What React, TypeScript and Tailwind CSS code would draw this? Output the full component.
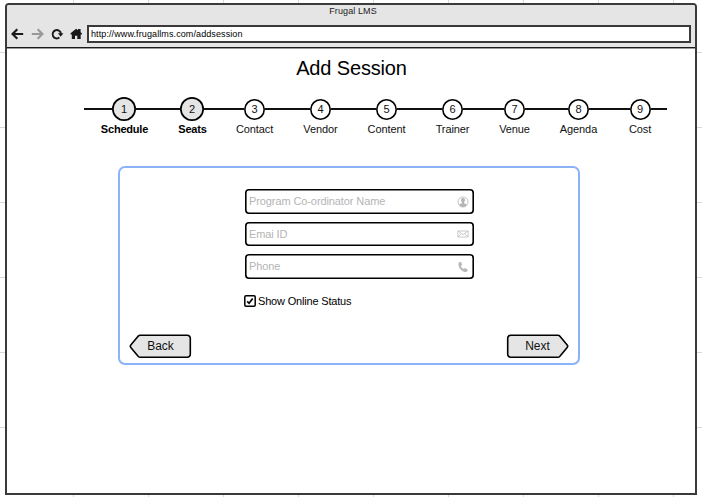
import React from "react";

type Step = { n: number; label: string; done?: boolean };

const steps: Step[] = [
  { n: 1, label: "Schedule", done: true },
  { n: 2, label: "Seats", done: true },
  { n: 3, label: "Contact" },
  { n: 4, label: "Vendor" },
  { n: 5, label: "Content" },
  { n: 6, label: "Trainer" },
  { n: 7, label: "Venue" },
  { n: 8, label: "Agenda" },
  { n: 9, label: "Cost" },
];

function NavIcons() {
  return (
    <div className="flex items-center">
      <svg className="ml-[4px] h-[12px] w-[13px]" viewBox="0 0 13 12" fill="none" stroke="#1c191b" strokeWidth="2.2">
        <path d="M12.2 6H2M6.3 1.2L1.5 6l4.8 4.8" />
      </svg>
      <svg className="ml-[7px] h-[12px] w-[13px]" viewBox="0 0 13 12" fill="none" stroke="#999" strokeWidth="2.2">
        <path d="M.8 6H11M6.7 1.2L11.5 6l-4.8 4.8" />
      </svg>
      <svg className="ml-[7px] h-[12px] w-[13px]" viewBox="0 0 13 12">
        <path d="M8.4 9.6A4.2 4.2 0 1 1 10 5.8" fill="none" stroke="#1c191b" strokeWidth="1.9" />
        <path d="M6.9 5.3h5.5L9.7 8.7z" fill="#1c191b" />
      </svg>
      <svg className="ml-[6px] h-[12px] w-[13px]" viewBox="0 0 13 12" fill="#1c191b">
        <path d="M6.1.7L8 2.2V1h2.600v3.200L11.900 5.300v1.300h-1.200V11H7.300V7.800H5V11H1.800V6.600H.6V5.300z" />
      </svg>
    </div>
  );
}

function UserIcon() {
  return (
    <svg className="h-[12px] w-[12px]" viewBox="0 0 12 12">
      <circle cx="6" cy="6" r="5" fill="none" stroke="#bdbdbd" strokeWidth=".9" />
      <path d="M6 2c-1.5 0-2.1 1-2 2.3.1 1.1.5 1.8 1 2.2v.8c-1 .5-2.3.6-2.9 1.5C3 10.2 4.4 11 6 11s3-.8 3.9-2.2C9.3 7.900 8 7.800 7 7.300v-.8c.5-.4.9-1.100 1-2.200C8.100 3 7.500 2 6 2z" fill="#b5b5b5" />
    </svg>
  );
}

function MailIcon() {
  return (
    <svg className="h-[12px] w-[12px]" viewBox="0 0 12 12" fill="none" stroke="#bbb" strokeWidth=".8">
      <path d="M.9 3h10.200v6H.9zM1 3.100l5 3.500 5-3.500M1 8.900l3.300-3.200M11 8.900L7.700 5.700" />
    </svg>
  );
}

function PhoneIcon() {
  return (
    <svg className="h-[12px] w-[12px]" viewBox="0 0 12 12" fill="#b8b8b8">
      <path d="M2.700 1L4.100.9l1 2.900L3.900 4.900c.6 1.500 1.500 2.500 2.900 3.200l1.200-1 2.700 1.500-.2 1.500c-.5.8-1.500 1-2.700.8C4.400 10.300 1.700 7 1.400 3.600 1.300 2.300 1.800 1.300 2.700 1z" />
    </svg>
  );
}

function Field({ label, icon, size }: { label: string; icon: React.ReactNode; size: string }) {
  return (
    <div className={`flex w-[229px] items-center justify-between rounded-[4px] bg-white pl-[4px] pr-[5px] shadow-[inset_0_0_0_1.6px_#000] ${size}`}>
      <span className="text-[11px] tracking-[-0.1px] text-[#b4b4b4]">{label}</span>
      {icon}
    </div>
  );
}

function ArrowButton({ label, direction }: { label: string; direction: "left" | "right" }) {
  const left = direction === "left";
  return (
    <button className="relative flex h-[25px] w-[63px] items-center justify-center text-[12px] text-[#111]">
      <svg className={`absolute inset-0 h-[25px] w-[63px] ${left ? "" : "-scale-x-100"}`} viewBox="0 0 63 25">
        <path
          d="M11 1.300H58.300a3 3 0 0 1 3 3V20.300a3 3 0 0 1-3 3H11Q10 23.300 9.300 22.500L1.800 13.500Q.8 12.300 1.800 11.100L9.300 2.100Q10 1.300 11 1.300z"
          fill="#e5e5e5"
          stroke="#000"
          strokeWidth="1.600"
        />
      </svg>
      <span className="relative pb-[1px]">{label}</span>
    </button>
  );
}

export default function App() {
  return (
    <div className="h-[497px] w-[702px] overflow-hidden bg-white bg-[linear-gradient(to_right,#d8d8dc_1px,transparent_1px),linear-gradient(to_bottom,#d8d8dc_1px,transparent_1px)] bg-[size:75px_75px] bg-[position:73px_52px] pl-[5px] pt-[3px] font-['Liberation_Sans',Arial,sans-serif]">
      <div className="flex h-[492px] w-[692px] flex-col overflow-hidden rounded-t-[4px] border-2 border-[#3c393b] bg-white">
        <header className="h-[43px] shrink-0 border-b border-[#1c191b] bg-[#e5e5e5] shadow-[0_1px_0_#999]">
          <div className="h-[20px] pl-[4px] text-center text-[9px] leading-[12px] tracking-[0.1px] text-[#222]">Frugal LMS</div>
          <div className="flex h-[18px] items-center">
            <NavIcons />
            <div className="ml-auto mr-[4px] flex h-[18px] w-[604px] items-center border-2 border-[#3c393b] bg-white pl-[2px] pt-[2px] text-[9px] tracking-[0.1px] text-black">
              http://www.frugallms.com/addsession
            </div>
          </div>
        </header>

        <main className="flex flex-col">
          <h1 className="mt-[8px] pl-[1px] text-center text-[20px] leading-[24px] tracking-[-0.15px] text-black">Add Session</h1>

          <div className="relative ml-[83px] mt-[17px] grid grid-cols-[68px_68px_57px_75px_57px_75px_49px_79px_44px]">
            <div className="absolute left-[-6px] top-[11px] h-[2px] w-[583px] bg-[#111]" />
            {steps.map((s) => (
              <div key={s.n} className="relative flex flex-col items-center text-[11px] text-[#111]">
                <div className="flex h-[24px] items-center">
                  <div
                    className={
                      s.done
                        ? "flex h-[24px] w-[24px] items-center justify-center rounded-full bg-[#e5e5e5] shadow-[inset_0_0_0_1.700px_#000]"
                        : "flex h-[21px] w-[21px] items-center justify-center rounded-full bg-white shadow-[inset_0_0_0_1.600px_#000]"
                    }
                  >
                    {s.n}
                  </div>
                </div>
                <span className={s.done ? "mt-[2px] pl-[1px] leading-[13px] font-bold tracking-[-0.2px] text-black" : "mt-[2px] leading-[13px] tracking-[-0.1px]"}>{s.label}</span>
              </div>
            ))}
          </div>

          <section className="ml-[111px] mt-[30px] flex h-[199px] w-[462px] flex-col rounded-[7px] border-2 border-[#8ab3f8] bg-white">
            <div className="ml-[125px] mt-[21px] flex flex-col">
              <Field label="Program Co-ordinator Name" icon={<UserIcon />} size="h-[25px]" />
              <Field label="Emai ID" icon={<MailIcon />} size="mt-[8px] h-[24px]" />
              <Field label="Phone" icon={<PhoneIcon />} size="mt-[8px] h-[25px]" />
              <label className="mt-[16px] flex h-[12px] items-center text-[11px] tracking-[-0.180px] text-black">
                <svg className="mr-[2px] -ml-[1px] h-[12px] w-[12px]" viewBox="0 0 12 12" fill="none" stroke="#000">
                  <rect x=".8" y=".8" width="10.400" height="10.400" rx="1.200" strokeWidth="1.500" />
                  <path d="M3.200 6.300l1.900 2L8.700 3.500" strokeWidth="1.700" />
                </svg>
                Show Online Status
              </label>
            </div>
            <div className="mt-[27px] flex justify-between pl-[9px] pr-[9px]">
              <ArrowButton label="Back" direction="left" />
              <ArrowButton label="Next" direction="right" />
            </div>
          </section>
        </main>
      </div>
    </div>
  );
}
